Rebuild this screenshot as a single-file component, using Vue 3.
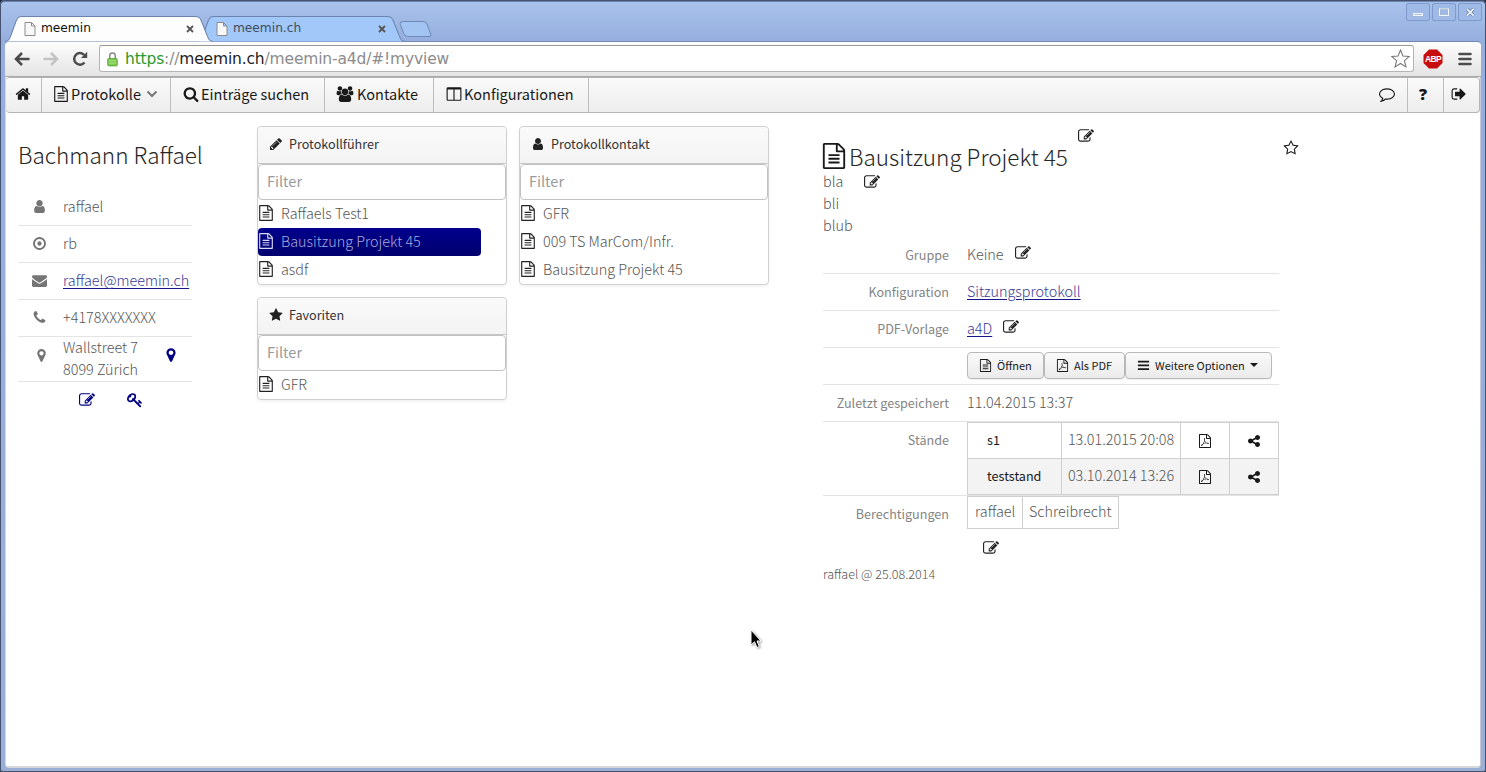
<template>
  <div class="window">
    <div class="titlebar">
      <div class="tabs">
        <div
          v-for="(tab, index) in tabs"
          :key="tab"
          :class="['tab', index === activeTab ? 'active' : '']"
          @click="activeTab = index"
        >
          <svg class="tab-shape" viewBox="0 0 206 26" preserveAspectRatio="none">
            <path d="M0 25.5 C4 25 4.500 23 6 19 L11 5 C12.500 1.500 13.500 .5 17 .5 H188 C192 .5 193 1.500 194.500 5 L200 19 C201.500 23 202 25 206 25.500" />
          </svg>
          <svg class="page-icon" viewBox="0 0 12 14">
            <path d="M1 .5H7.500L11 4V13.500H1ZM7.500 .5V4H11" />
          </svg>
          <span class="tab-title">{{ tab }}</span>
          <svg class="tab-close" viewBox="0 0 8 8"><path d="M1 1L7 7M7 1L1 7" /></svg>
        </div>
        <svg class="new-tab" viewBox="0 0 33 17">
          <path d="M4 .5H24Q27 .5 28 3L32 14Q32 15.500 30 15.500H9Q6 15.500 5 13L1 3Q.5 .5 4 .5Z" />
        </svg>
      </div>
      <div class="window-buttons">
        <svg class="win-btn" viewBox="0 0 24 18"><path d="M7 11H17V13H7Z" class="win-glyph" /></svg>
        <svg class="win-btn" viewBox="0 0 24 18"><path d="M7 5.500H17V13H7Z" class="win-glyph" /></svg>
        <svg class="win-btn" viewBox="0 0 24 18">
          <path d="M8.500 5.500L16 13M16 5.500L8.500 13" class="win-cross-edge" />
          <path d="M8.500 5.500L16 13M16 5.500L8.500 13" class="win-cross" />
        </svg>
      </div>
    </div>

    <div class="toolbar">
      <svg class="nav-icon" viewBox="0 0 16 16"><path d="M15.500 8H3M8 2L2 8L8 14" /></svg>
      <svg class="nav-icon disabled" viewBox="0 0 16 16"><path d="M.5 8H13M8 2L14 8L8 14" /></svg>
      <svg class="nav-icon" viewBox="0 0 16 16">
        <path d="M12.500 11.500A5.800 5.800 0 1 1 12.300 4" />
        <path d="M15.200 .8V7H9Z" class="solid" />
      </svg>
      <div class="address">
        <svg class="lock" viewBox="0 0 12 16">
          <path d="M3 8V4.500Q3 1.500 6 1.500T9 4.500V8" class="shackle" />
          <rect x=".8" y="7.500" width="10.400" height="8" rx="1" />
          <path d="M2 10H10M2 12.500H10" class="lines" />
        </svg>
        <div class="url">
          <span class="scheme">https</span>://<span class="host">meemin.ch</span>/meemin-a4d/#!myview
        </div>
        <svg class="bookmark" viewBox="0 0 18 18">
          <path d="M9 1L11.300 6.700L17.300 7.100L12.700 11L14.200 16.900L9 13.700L3.800 16.900L5.300 11L.7 7.100L6.700 6.700Z" />
        </svg>
      </div>
      <div class="adblock">
        <svg class="octagon" viewBox="0 0 20 20"><path d="M6 .5H14L19.500 6V14L14 19.500H6L.5 14V6Z" /></svg>
        <span>ABP</span>
      </div>
      <svg class="chrome-menu" viewBox="0 0 14 14"><path d="M1.500 2H12.500M1.500 7H12.500M1.500 12H12.500" /></svg>
    </div>

    <div class="page">
      <nav class="menubar">
        <a class="menu-item home"><Icon name="home" /></a>
        <a class="menu-item protocols">
          <Icon name="file" />Protokolle
          <svg class="chevron" viewBox="0 0 12 8"><path d="M1.500 1.500L6 6L10.500 1.500" /></svg>
        </a>
        <a class="menu-item search"><Icon name="search" />Einträge suchen</a>
        <a class="menu-item contacts"><Icon name="users" class="wide" />Kontakte</a>
        <a class="menu-item configs"><Icon name="columns" />Konfigurationen</a>
        <span class="menu-spacer"></span>
        <a class="menu-item right first"><Icon name="comment" /></a>
        <a class="menu-item right help">?</a>
        <a class="menu-item right last"><Icon name="signOut" /></a>
      </nav>

      <main class="content">
        <section class="profile">
          <h1>Bachmann Raffael</h1>
          <div v-for="row in profile" :key="row.icon" class="profile-row">
            <Icon :name="row.icon" class="profile-icon" />
            <a v-if="row.link" class="link">{{ row.text }}</a>
            <span v-else>{{ row.text }}</span>
          </div>
          <div class="profile-row address-row">
            <Icon name="marker" class="profile-icon marker" />
            <span class="street">Wallstreet 7<br />8099 Zürich</span>
            <Icon name="marker" class="navy" />
          </div>
          <div class="profile-actions">
            <Icon name="edit" class="navy" />
            <Icon name="key" class="navy" />
          </div>
        </section>

        <section class="lists">
          <div v-for="(column, c) in columns" :key="c" class="list-column">
            <div v-for="panel in column" :key="panel.title" class="panel">
              <div class="panel-caption"><Icon :name="panel.icon" class="small" />{{ panel.title }}</div>
              <input class="filter" placeholder="Filter" />
              <div
                v-for="item in panel.items"
                :key="item"
                :class="['list-item', selected === panel.title + item ? 'selected' : '']"
                @click="selected = panel.title + item"
              >
                <Icon name="file" />{{ item }}
              </div>
            </div>
          </div>
        </section>

        <section class="detail">
          <div class="detail-title">
            <Icon name="file" class="large" />
            <h1>Bausitzung Projekt 45</h1>
            <Icon name="edit" class="title-edit" />
            <Icon name="starO" class="favorite" />
          </div>
          <div class="description">
            <span>bla<br />bli<br />blub</span>
            <Icon name="edit" />
          </div>
          <div class="form-row">
            <label>Gruppe</label>
            <div class="value">Keine <Icon name="edit" class="inline-edit" /></div>
          </div>
          <div class="form-row">
            <label>Konfiguration</label>
            <div class="value"><a class="link">Sitzungsprotokoll</a></div>
          </div>
          <div class="form-row">
            <label>PDF-Vorlage</label>
            <div class="value"><a class="link">a4D</a> <Icon name="edit" class="inline-edit" /></div>
          </div>
          <div class="form-row">
            <label></label>
            <div class="value buttons">
              <button class="btn open"><Icon name="file" />Öffnen</button>
              <button class="btn pdf"><Icon name="pdf" />Als PDF</button>
              <button class="btn more"><Icon name="bars" />Weitere Optionen<span class="caret"></span></button>
            </div>
          </div>
          <div class="form-row">
            <label>Zuletzt gespeichert</label>
            <div class="value">11.04.2015 13:37</div>
          </div>
          <div class="form-row states">
            <label>Stände</label>
            <div class="state-table">
              <div v-for="state in states" :key="state.name" class="state-row">
                <span class="state-name">{{ state.name }}</span>
                <span class="state-date">{{ state.date }}</span>
                <span class="state-icon"><Icon name="pdf" class="small" /></span>
                <span class="state-icon"><Icon name="share" class="small" /></span>
              </div>
            </div>
          </div>
          <div class="form-row permissions">
            <label>Berechtigungen</label>
            <div>
              <div class="permission-table">
                <span class="permission-user">raffael</span>
                <span class="permission-right">Schreibrecht</span>
              </div>
              <Icon name="edit" class="permission-edit" />
            </div>
          </div>
          <div class="created">raffael @ 25.08.2014</div>
        </section>
      </main>
    </div>

    <svg class="cursor" viewBox="0 0 12 20">
      <path d="M1 1V16L4.500 12.800L7 18.500L9.300 17.500L7 12H11Z" />
    </svg>
  </div>
</template>

<script setup>
import { h, ref } from 'vue';

const sheet = 'M1596 380q28 28 48 76t20 88v1152q0 40-28 68t-68 28h-1344q-40 0-68-28t-28-68v-1600q0-40 28-68t68-28h896q40 0 88 20t76 48zm-444-244v376h376q-10-29-22-41l-313-313q-12-12-41-22zm384 1528v-1024h-416q-40 0-68-28t-28-68v-416h-768v1536h1280z';

const paths = {
  home: 'M1472 992v480q0 26-19 45t-45 19h-384v-384h-256v384h-384q-26 0-45-19t-19-45v-480q0-1 .5-3t.5-3l575-474 575 474q1 2 1 6zm223-69l-62 74q-8 9-21 11h-3q-13 0-21-7l-692-577-692 577q-12 8-24 7-13-2-21-11l-62-74q-8-10-7-23.5t11-21.5l719-599q32-26 76-26t76 26l244 204v-195q0-14 9-23t23-9h192q14 0 23 9t9 23v408l219 182q10 8 11 21.5t-7 23.5z',
  file: sheet + 'm-1024-864q0-14 9-23t23-9h704q14 0 23 9t9 23v64q0 14-9 23t-23 9h-704q-14 0-23-9t-9-23v-64zm736 224q14 0 23 9t9 23v64q0 14-9 23t-23 9h-704q-14 0-23-9t-9-23v-64q0-14 9-23t23-9h704zm0 256q14 0 23 9t9 23v64q0 14-9 23t-23 9h-704q-14 0-23-9t-9-23v-64q0-14 9-23t23-9h704z',
  pdf: sheet + 'm-514-593q33 26 84 56 59-7 117-7 147 0 177 49 16 22 2 52 0 1-1 2l-2 2v1q-6 38-71 38-48 0-115-20t-130-53q-221 24-392 83-153 262-242 262-15 0-28-7l-24-12q-1-1-6-5-10-10-6-36 9-40 56-91.5t132-96.5q14-9 23 6 2 2 2 4 52-85 107-197 68-136 104-262-24-82-30.5-159.5t6.5-127.5q11-40 42-40h22q23 0 35 15 18 21 9 68-2 6-4 8 1 3 1 8v30q-2 123-14 192 55 164 146 238zm-576 411q52-24 137-158-51 40-87.5 84t-49.5 74zm398-920q-15 42-2 132 1-7 7-44 0-3 7-43 1-4 4-8-1-1-1-2t-1-2-1-2q-1-22-13-36 0 1-1 2v2zm-124 661q135-54 284-81-2-1-13-9.5t-16-13.5q-76-67-127-176-27 86-83 197-30 56-45 83zm646-16q-24-24-140-24 76 28 124 28 14 0 18-1 0-1-2-3z',
  search: 'M1216 832q0-185-131.5-316.5t-316.5-131.5-316.5 131.5-131.5 316.5 131.5 316.5 316.5 131.5 316.5-131.5 131.5-316.5zm512 832q0 52-38 90t-90 38q-54 0-90-38l-343-342q-179 124-399 124-143 0-273.5-55.5t-225-150-150-225-55.5-273.5 55.5-273.5 150-225 225-150 273.5-55.5 273.5 55.5 225 150 150 225 55.5 273.5q0 220-124 399l343 343q37 37 37 90z',
  users: 'M657 896q-162 5-265 128h-134q-82 0-138-40.5t-56-118.5q0-353 124-353 6 0 43.5 21t97.5 42.5 119 21.5q67 0 133-23-5 37-5 66 0 139 81 256zm1071 637q0 120-73 189.5t-194 69.5h-874q-121 0-194-69.5t-73-189.5q0-53 3.5-103.5t14-109 26.5-108.5 43-97.5 62-81 85.5-53.5 111.5-20q10 0 43 21.5t73 48 107 48 135 21.5 135-21.5 107-48 73-48 43-21.5q61 0 111.5 20t85.5 53.5 62 81 43 97.5 26.5 108.5 14 109 3.5 103.500zm-1024-1277q0 106-75 181t-181 75-181-75-75-181 75-181 181-75 181 75 75 181zm704 384q0 159-112.5 271.5t-271.5 112.5-271.5-112.5-112.5-271.5 112.5-271.5 271.5-112.5 271.5 112.5 112.5 271.5zm576 225q0 78-56 118.5t-138 40.5h-134q-103-123-265-128 81-117 81-256 0-29-5-66 66 23 133 23 59 0 119-21.5t97.5-42.5 43.5-21q124 0 124 353zm-128-609q0 106-75 181t-181 75-181-75-75-181 75-181 181-75 181 75 75 181z',
  columns: 'M224 1536h608v-1152h-640v1120q0 13 9.5 22.5t22.5 9.5zm1376-32v-1120h-640v1152h608q13 0 22.5-9.5t9.5-22.5zm128-1216v1216q0 66-47 113t-113 47h-1344q-66 0-113-47t-47-113v-1216q0-66 47-113t113-47h1344q66 0 113 47t47 113z',
  comment: 'M896 384q-204 0-381.5 69.5t-282 187.5-104.5 255q0 112 71.5 213.5t201.5 175.5l87 50-27 96q-24 91-70 172 152-63 275-171l43-38 57 6q69 8 130 8 204 0 381.5-69.5t282-187.5 104.5-255-104.5-255-282-187.5-381.5-69.5zm896 512q0 174-120 321.5t-326 233-450 85.5q-70 0-145-8-198 175-460 242-49 14-114 22h-5q-15 0-27-10.5t-16-27.5v-1q-3-4-.5-12t2-10 4.500-9.500l6-9 7-8.500 8-9q7-8 31-34.500t34.500-38 31-39.500 32.500-51 27-59 26-76q-157-89-247.500-220t-90.500-281q0-174 120-321.500t326-233 450-85.500 450 85.500 326 233 120 321.500z',
  signOut: 'M704 1440q0 4 1 20t.5 26.5-3 23.5-10 19.5-20.5 6.5h-320q-119 0-203.5-84.5t-84.5-203.5v-704q0-119 84.5-203.5t203.5-84.5h320q13 0 22.5 9.5t9.5 22.5q0 4 1 20t.5 26.5-3 23.5-10 19.5-20.5 6.5h-320q-66 0-113 47t-47 113v704q0 66 47 113t113 47h312l11.5 1 11.5 3 8 5.5 7 9 2 13.5zm928-544q0 26-19 45l-544 544q-19 19-45 19t-45-19-19-45v-288h-448q-26 0-45-19t-19-45v-384q0-26 19-45t45-19h448v-288q0-26 19-45t45-19 45 19l544 544q19 19 19 45z',
  user: 'M1536 1399q0 109-62.5 187t-150.5 78h-854q-88 0-150.5-78t-62.5-187q0-85 8.5-160.5t31.5-152 58.5-131 94-89 134.5-34.5q131 128 313 128t313-128q76 0 134.5 34.5t94 89 58.5 131 31.5 152 8.5 160.5zm-256-887q0 159-112.5 271.5t-271.5 112.5-271.5-112.5-112.5-271.5 112.5-271.5 271.5-112.5 271.5 112.5 112.5 271.5z',
  dot: 'M1152 896q0 106-75 181t-181 75-181-75-75-181 75-181 181-75 181 75 75 181zm-256-544q-148 0-273 73t-198 198-73 273 73 273 198 198 273 73 273-73 198-198 73-273-73-273-198-198-273-73zm768 544q0 209-103 385.500t-279.500 279.500-385.500 103-385.500-103-279.500-279.500-103-385.500 103-385.500 279.500-279.500 385.500-103 385.500 103 279.500 279.500 103 385.500z',
  envelope: 'M1792 710v794q0 66-47 113t-113 47h-1472q-66 0-113-47t-47-113v-794q44 49 101 87 362 246 497 345 57 42 92.5 65.5t94.5 48 110 24.5h2q51 0 110-24.5t94.5-48 92.5-65.5q170-123 498-345 57-39 100-87zm0-294q0 79-49 151t-122 123q-376 261-468 325-10 7-42.5 31t-54 38.5-52 32.5-57.5 27-50 9h-2q-23 0-50-9t-57.5-27-52-32.5-54-38.5-42.5-31q-91-64-262-182.5t-205-142.5q-62-42-117-115.5t-55-136.5q0-78 41.5-130t118.5-52h1472q65 0 112.5 47t47.5 113z',
  phone: 'M1600 1240q0 27-10 70.5t-21 68.5q-21 50-122 106-94 51-186 51-27 0-53-3.5t-57.5-12.5-47-14.5-55.5-20.5-49-18q-98-35-175-83-127-79-264-216t-216-264q-48-77-83-175-3-9-18-49t-20.5-55.5-14.5-47-12.5-57.5-3.5-53q0-92 51-186 56-101 106-122 25-11 68.5-21t70.5-10q14 0 21 3 18 6 53 76 11 19 30 54t35 63.5 31 53.5q3 4 17.5 25t21.5 35.5 7 28.5q0 20-28.5 50t-62 55-62 53-28.5 46q0 9 5 22.5t8.5 20.5 14 24 11.5 19q76 137 174 235t235 174q2 1 19 11.5t24 14 20.5 8.5 22.5 5q18 0 46-28.5t53-62 55-62 50-28.5q14 0 28.5 7t35.5 21.5 25 17.5q25 15 53.5 31t63.5 35 54 30q70 35 76 53 3 7 3 21z',
  marker: 'M1152 640q0-106-75-181t-181-75-181 75-75 181 75 181 181 75 181-75 75-181zm256 0q0 109-33 179l-364 774q-16 33-47.5 52t-67.5 19-67.5-19-46.5-52l-365-774q-33-70-33-179 0-212 150-362t362-150 362 150 150 362z',
  edit: 'M888 1184l116-116-152-152-116 116v56h96v96h56zm440-720q-16-16-33 1l-350 350q-17 17-1 33t33-1l350-350q17-17 1-33zm80 594v190q0 119-84.5 203.5t-203.5 84.5h-832q-119 0-203.5-84.5t-84.5-203.5v-832q0-119 84.5-203.5t203.5-84.5h832q63 0 117 25 15 7 18 23 3 17-9 29l-49 49q-14 14-32 8-23-6-45-6h-832q-66 0-113 47t-47 113v832q0 66 47 113t113 47h832q66 0 113-47t47-113v-126q0-13 9-22l64-64q15-15 35-7t20 29zm-96-738l288 288-672 672h-288v-288zm444 132l-92 92-288-288 92-92q28-28 68-28t68 28l152 152q28 28 28 68t-28 68z',
  key: 'M832 512q0-80-56-136t-136-56-136 56-56 136q0 42 19 83-41-19-83-19-80 0-136 56t-56 136 56 136 136 56 136-56 56-136q0-42-19-83 41 19 83 19 80 0 136-56t56-136zm851 704q0 17-49 66t-66 49q-9 0-28.5-16t-36.5-33-38.5-40-24.5-26l-96 96 220 220q28 28 28 68 0 42-39 81t-81 39q-40 0-68-28l-671-671q-176 131-365 131-163 0-265.5-102.5t-102.5-265.5q0-160 95-313t248-248 313-95q163 0 265.5 102.5t102.5 265.5q0 189-131 365l355 355 96-96q-3-3-26-24.5t-40-38.5-33-36.5-16-28.5q0-17 49-66t66-49q13 0 23 10 6 6 46 44.5t82 79.5 86.5 86 73 78 28.5 41z',
  pencil: 'M491 1536l91-91-235-235-91 91v107h128v128h107zm523-928q0-22-22-22-10 0-17 7l-542 542q-7 7-7 17 0 22 22 22 10 0 17-7l542-542q7-7 7-17zm-54-192l416 416-832 832h-416v-416zm683 96q0 53-37 90l-166 166-416-416 166-165q36-38 90-38 53 0 91 38l235 234q37 39 37 91z',
  star: 'M1728 647q0 22-26 48l-363 354 86 500q1 7 1 20 0 21-10.5 35.5t-30.5 14.5q-19 0-40-12l-449-236-449 236q-22 12-40 12-21 0-31.5-14.5t-10.5-35.5q0-6 2-20l86-500-364-354q-25-27-25-48 0-37 56-46l502-73 225-455q19-41 49-41t49 41l225 455 502 73q56 9 56 46z',
  starO: 'M1201 1004l306-297-422-62-189-382-189 382-422 62 306 297-73 421 378-199 377 199zm527-357q0 22-26 48l-363 354 86 500q1 7 1 20 0 50-41 50-19 0-40-12l-449-236-449 236q-22 12-40 12-21 0-31.5-14.5t-10.5-35.5q0-6 2-20l86-500-364-354q-25-27-25-48 0-37 56-46l502-73 225-455q19-41 49-41t49 41l225 455 502 73q56 9 56 46z',
  share: 'M1344 1024q133 0 226.5 93.5t93.5 226.5-93.5 226.5-226.5 93.5-226.5-93.5-93.5-226.5q0-12 2-34l-360-180q-92 86-218 86-133 0-226.5-93.5t-93.5-226.5 93.5-226.5 226.5-93.5q126 0 218 86l360-180q-2-22-2-34 0-133 93.5-226.5t226.5-93.5 226.5 93.5 93.5 226.5-93.5 226.5-226.5 93.5q-126 0-218-86l-360 180q2 22 2 34t-2 34l360 180q92-86 218-86z',
  bars: 'M128 256h1536v224h-1536zM128 768h1536v224h-1536zM128 1280h1536v224h-1536z',
};

const Icon = (props) => h(
  'svg',
  { class: 'icon', viewBox: props.name === 'users' ? '0 0 2048 1792' : '0 0 1792 1792' },
  [h('path', { d: paths[props.name] })],
);
Icon.props = ['name'];

const tabs = ['meemin', 'meemin.ch'];
const activeTab = ref(0);

const profile = [
  { icon: 'user', text: 'raffael' },
  { icon: 'dot', text: 'rb' },
  { icon: 'envelope', text: 'raffael@meemin.ch', link: true },
  { icon: 'phone', text: '+4178XXXXXXX' },
];

const columns = [
  [
    { title: 'Protokollführer', icon: 'pencil', items: ['Raffaels Test1', 'Bausitzung Projekt 45', 'asdf'] },
    { title: 'Favoriten', icon: 'star', items: ['GFR'] },
  ],
  [
    { title: 'Protokollkontakt', icon: 'user', items: ['GFR', '009 TS MarCom/Infr.', 'Bausitzung Projekt 45'] },
  ],
];
const selected = ref('ProtokollführerBausitzung Projekt 45');

const states = [
  { name: 's1', date: '13.01.2015 20:08' },
  { name: 'teststand', date: '03.10.2014 13:26' },
];
</script>

<style>
body {
  margin: 0;
  background: #1f2a3d;
}
</style>

<style scoped>
* {
  box-sizing: border-box;
}

.window {
  position: relative;
  display: flex;
  flex-direction: column;
  width: 1486px;
  height: 772px;
  padding: 0 5px 4px 5px;
  overflow: hidden;
  border-radius: 5px 5px 3px 3px;
  background: linear-gradient(#a9c4ec, #96aede 41px, #9aaed6);
  box-shadow: inset 0 0 0 1px #45526f, inset 0 2px 0 #6d83ab;
  font-family: 'Noto Sans CJK SC Light', 'Noto Sans CJK SC', 'Noto Sans', sans-serif;
  font-size: 14.380px;
  font-weight: 300;
  line-height: 22px;
  color: #555;
  white-space: nowrap;
}

.titlebar {
  display: flex;
  justify-content: space-between;
  height: 41px;
  flex: none;
}

.tabs {
  display: flex;
  padding-top: 16px;
}

.tab {
  position: relative;
  display: flex;
  align-items: center;
  width: 192px;
  height: 25px;
  padding: 0 4px 0 19px;
  font: 13px/25px 'DejaVu Sans', sans-serif;
  color: #3f4b5c;
}

.tab.active {
  z-index: 1;
  color: #111;
}

.tab-shape {
  position: absolute;
  left: 0;
  top: 0;
  width: 208px;
  height: 26px;
  fill: #a1c8f8;
  stroke: #6c83ae;
}

.tab.active .tab-shape {
  fill: #fdfdfe;
}

.page-icon {
  position: relative;
  width: 12px;
  height: 14px;
  fill: #f8f8f8;
  stroke: #8c8c8c;
}

.tab-title {
  position: relative;
  flex: 1;
  padding-left: 5px;
  font-size: 12.2px;
}

.tab-close {
  position: relative;
  width: 8px;
  height: 8px;
  margin-right: -1px;
  fill: none;
  stroke: #555;
  stroke-width: 1.8;
}

.new-tab {
  width: 33px;
  height: 17px;
  margin: 5px 0 0 10px;
  fill: #a1c4f3;
  stroke: #7088b5;
}

.window-buttons {
  display: flex;
  gap: 2px;
  margin-right: -1px;
  padding-top: 3px;
}

.win-btn {
  width: 24px;
  height: 18px;
  border: 1px solid #7f9aca;
  border-radius: 2px;
  background: #9fbae6;
}

.win-glyph {
  fill: none;
  stroke: #f2f7ff;
  stroke-width: 1.5;
  paint-order: stroke;
  filter: drop-shadow(0 0 .7px #456);
}

.win-cross-edge {
  stroke: #5f7296;
  stroke-width: 3.400;
}

.win-cross {
  stroke: #f2f7ff;
  stroke-width: 1.9;
}

.toolbar {
  display: flex;
  align-items: center;
  height: 36px;
  flex: none;
  padding: 0 9px 1px 9px;
  border-top: 1px solid #7287b1;
  border-bottom: 1px solid #a9a9a9;
  border-radius: 4px 4px 0 0;
  background: linear-gradient(#fdfdfe, #e4e4e4);
}

.nav-icon {
  width: 16px;
  height: 16px;
  margin-right: 13px;
  fill: none;
  stroke: #4b4b4b;
  stroke-width: 2.500;
}

.nav-icon.disabled {
  stroke: #c3c3c3;
}

.nav-icon .solid {
  fill: #4b4b4b;
  stroke: none;
}

.address {
  display: flex;
  flex: 1;
  align-items: center;
  height: 27px;
  margin-left: -2px;
  padding: 0 3px 0 7px;
  border: 1px solid #b4b4b4;
  border-top-color: #969696;
  border-radius: 3px;
  background: #fff;
}

.lock {
  width: 11px;
  height: 16px;
  fill: #7fcb52;
  stroke: #5ca53b;
}

.lock .shackle {
  fill: none;
  stroke: #888;
  stroke-width: 1.6;
}

.lock .lines {
  stroke: #a9e383;
}

.url {
  flex: 1;
  padding-left: 7px;
  font: 15.500px 'DejaVu Sans', sans-serif;
  letter-spacing: -0.160px;
  color: #8c8c8c;
}

.scheme {
  color: #2b982b;
}

.host {
  color: #222;
}

.bookmark {
  width: 19px;
  height: 19px;
  fill: #fff;
  stroke: #777;
}

.adblock {
  position: relative;
  display: flex;
  align-items: center;
  justify-content: center;
  width: 20px;
  height: 20px;
  margin-left: 9px;
  font: bold 8.500px/12px 'Liberation Sans', sans-serif;
  letter-spacing: -0.600px;
  color: #fff;
}

.adblock span {
  position: relative;
}

.octagon {
  position: absolute;
  left: 0;
  top: 0;
  width: 20px;
  height: 20px;
  fill: #c70d0d;
}

.chrome-menu {
  width: 14px;
  height: 14px;
  margin-left: 15px;
  stroke: #4c4c4c;
  stroke-width: 2.600;
  stroke-linecap: round;
}

.page {
  flex: 1;
  border-bottom: 2px solid #d5d8da;
  border-right: 1px solid #c6cad6;
  border-left: 1px solid #d5d8e2;
  border-radius: 0 0 4px 4px;
  background: #fff;
}

.menubar {
  display: flex;
  height: 36px;
  border: 1px solid #b5b5b5;
  border-radius: 4px;
  border-left: 0;
  background: linear-gradient(#fafafa, #ededed);
}

.menu-item {
  display: flex;
  align-items: center;
  padding-bottom: 2px;
  border-right: 1px solid #bdbdbd;
  font-family: 'Noto Sans CJK SC', sans-serif;
  font-size: 14.500px;
  font-weight: 400;
  color: #191919;
}

.icon {
  width: 16px;
  height: 16px;
  flex: none;
  fill: currentColor;
}

.icon.small {
  width: 14px;
  height: 14px;
}

.icon.wide {
  width: 18px;
  margin: 0 3px 0 -1px;
}

.menu-item.home {
  width: 36px;
  padding-left: 9px;
}

.menu-item.protocols {
  width: 129px;
  padding-left: 11px;
}

.menu-item.protocols .icon {
  margin-right: 2px;
}

.menu-item.search {
  width: 154px;
  padding-left: 12px;
}

.menu-item.search .icon {
  margin-right: 2px;
}

.menu-item.contacts {
  width: 109px;
  padding-left: 12px;
}

.menu-item.configs {
  width: 155px;
  padding-left: 12px;
}

.menu-item.configs .icon {
  margin-right: 2px;
}

.chevron {
  width: 12px;
  height: 8px;
  margin-left: 5px;
  fill: none;
  stroke: #777;
  stroke-width: 2;
}

.menu-spacer {
  flex: 1;
}

.menu-item.right {
  justify-content: center;
  width: 36px;
}

.menu-item.first {
  width: 41px;
  padding-right: 1px;
}

.menu-item.help {
  padding-right: 5px;
  font-family: 'Open Sans', sans-serif;
  font-size: 16px;
  font-weight: 800;
}

.menu-item.last {
  width: 35px;
  padding-right: 5px;
  border-right: 0;
}

.content {
  display: flex;
  align-items: flex-start;
}

h1 {
  margin: 0;
  font-size: 22.500px;
  font-weight: 300;
  line-height: 30px;
  color: #262626;
}

.profile {
  width: 174px;
  margin: 27px 65px 0 12px;
}

.profile h1 {
  margin: -1px 0 20px;
}

.profile-row {
  display: flex;
  align-items: center;
  height: 37px;
  padding: 0 0 2px 14px;
  border-bottom: 1px solid #e4e4e4;
}

.profile-icon {
  width: 15px;
  height: 15px;
  margin-right: 16px;
  color: #757575;
}

.profile-row.address-row {
  height: 45px;
}

.address-row .icon {
  margin-bottom: 6px;
}

.profile-icon.marker {
  margin: 0 14px 6px 2px;
}

.street {
  width: 100px;
}

.link {
  color: #3a3a98;
  text-decoration: underline;
  text-decoration-color: #16168a;
  text-underline-offset: 2px;
}

.navy {
  color: #000080;
}

.profile-actions {
  display: flex;
  gap: 32px;
  padding: 10px 0 0 61px;
}

.lists {
  display: flex;
  gap: 12px;
  width: 512px;
  padding-top: 13px;
}

.list-column {
  display: flex;
  flex-direction: column;
  gap: 12px;
  width: 250px;
}

.panel {
  border: 1px solid #d0d0d0;
  border-radius: 4px;
  background: #fff;
  box-shadow: 0 2px 3px rgba(0, 0, 0, 0.05);
}

.panel-caption {
  display: flex;
  align-items: center;
  gap: 6px;
  height: 37px;
  padding: 0 0 2px 11px;
  border-bottom: 1px solid #c6c6c6;
  border-radius: 4px 4px 0 0;
  background: linear-gradient(#fafafa, #f3f3f3);
  font-family: 'Noto Sans CJK SC', sans-serif;
  font-size: 12.600px;
  font-weight: 400;
  color: #333;
}

.panel-caption .icon {
  color: #222;
}

.filter {
  display: block;
  width: 248px;
  height: 36px;
  padding: 0 8px 3px;
  border: 1px solid #c2c2c2;
  border-radius: 4px;
  outline: 0;
  background: #fff;
  font-family: 'Noto Sans CJK SC', sans-serif;
  font-size: 14.500px;
  font-weight: 400;
}

.filter::placeholder {
  color: #9a9a9a;
}

.list-item {
  display: flex;
  align-items: center;
  gap: 7px;
  width: 223px;
  height: 28px;
  padding-bottom: 2px;
  border-radius: 4px;
}

.list-item .icon {
  color: #222;
}

.list-item.selected {
  background: linear-gradient(#00008c, #00006e);
  color: #a9a9dc;
}

.list-item.selected .icon {
  color: #dcdcf5;
}

.detail {
  width: 480px;
  margin-left: 54px;
  padding-top: 28px;
}

.detail-title {
  display: flex;
  align-items: flex-start;
  height: 29px;
}

.icon.large {
  width: 26px;
  height: 26px;
  margin: 2px 2px 0 -2px;
  color: #191919;
}

.title-edit {
  margin: -13px 0 0 10px;
  color: #222;
}

.favorite {
  margin: -1px 4px 0 auto;
  color: #222;
}

.description {
  display: flex;
  align-items: flex-start;
  gap: 11px;
  height: 67px;
}

.description .icon {
  margin-top: 4px;
  color: #222;
}

.form-row {
  display: flex;
  width: 456px;
  height: 37px;
  border-bottom: 1px solid #e4e4e4;
  line-height: 36px;
}

label {
  width: 126px;
  margin-right: 18px;
  font-family: 'Noto Sans CJK SC', sans-serif;
  font-size: 12.600px;
  font-weight: 400;
  text-align: right;
  color: #848484;
}

.value {
  display: flex;
  align-items: center;
  height: 36px;
  padding-bottom: 2px;
}

.value.buttons {
  padding-bottom: 1px;
}

.inline-edit {
  margin: -2px 0 0 11px;
  color: #222;
}

.btn {
  display: flex;
  align-items: center;
  gap: 5px;
  height: 27px;
  padding: 0 11px 1px;
  border: 1px solid #b9b9b9;
  border-radius: 4px;
  background: linear-gradient(#fafafa, #ebebeb);
  box-shadow: 0 1px 1px rgba(0, 0, 0, 0.06);
  font-family: 'Noto Sans CJK SC', sans-serif;
  font-size: 11px;
  font-weight: 400;
  color: #191919;
}

.btn .icon {
  width: 13px;
  height: 13px;
}

.btn.open {
  width: 77px;
}

.btn.pdf {
  width: 81px;
}

.btn.more {
  width: 147px;
}

.caret {
  border: 4px solid transparent;
  border-top-color: #191919;
  border-bottom: 0;
}

.form-row.states {
  height: 74px;
}

.state-table {
  width: 312px;
  height: 73px;
  border: 1px solid #cfcfcf;
  background: #fff;
}

.state-row {
  display: flex;
  height: 35px;
  line-height: 33px;
}

.state-row:nth-child(even) {
  height: 36px;
  border-top: 1px solid #cfcfcf;
  background: #f3f3f3;
}

.state-row span {
  border-right: 1px solid #cfcfcf;
}

.state-row span:last-child {
  width: 48px;
  border-right: 0;
}

.state-name {
  width: 94px;
  padding-left: 19px;
  font-family: 'Noto Sans CJK SC', sans-serif;
  font-size: 12.600px;
  font-weight: 400;
  color: #191919;
}

.state-date {
  width: 119px;
  line-height: 31px;
  text-align: center;
}

.state-icon {
  display: flex;
  align-items: center;
  justify-content: center;
  width: 49px;
  color: #191919;
}

.form-row.permissions {
  height: 66px;
  border-bottom: 0;
}

.permission-table {
  display: flex;
  height: 33px;
  border: 1px solid #cfcfcf;
  line-height: 28px;
}

.permission-user {
  width: 55px;
  padding-left: 7px;
  border-right: 1px solid #cfcfcf;
}

.permission-right {
  width: 95px;
  padding-left: 6px;
}

.permission-edit {
  display: block;
  margin: 11px 0 0 16px;
  color: #222;
}

.created {
  font-size: 12.550px;
  line-height: 24px;
}

.cursor {
  position: absolute;
  left: 750px;
  top: 629px;
  width: 12px;
  height: 20px;
  fill: #000;
  stroke: #fff;
  filter: drop-shadow(1px 1px 1px rgba(0, 0, 0, 0.4));
}
</style>
